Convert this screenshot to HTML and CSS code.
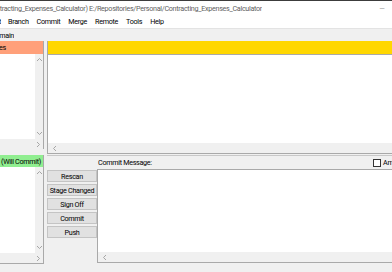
FILE: index.html
```html
<!DOCTYPE html>
<html lang="en">

<head>
    <meta charset="UTF-8">
    <meta name="viewport" content="width=device-width, initial-scale=1.0">
    <title>Git Gui</title>
    <link rel="stylesheet" href="styles.css">
</head>

<body>
    <div class="window">
        <div class="titlebar">
            <div class="title"><span>Git Gui (Contracting_Expenses_Calculator) E:/Repositories/Personal/Contracting_Expenses_Calculator</span></div>
            <div class="win-min">&#8212;</div>
        </div>
        <div class="menubar">
            <div class="menu-lead">
                <span>Repository</span>
                <span>Edit</span>
            </div>
            <span>Branch</span>
            <span>Commit</span>
            <span>Merge</span>
            <span>Remote</span>
            <span>Tools</span>
            <span>Help</span>
        </div>
        <div class="branch-bar"><span>Current Branch: main</span></div>

        <div class="top">
            <div class="files">
                <div class="pane-header unstaged"><span>Unstaged Changes</span></div>
                <div class="list-wrap">
                    <div class="list"></div>
                    <div class="vscroll">
                        <svg width="7" height="5" viewBox="0 0 7 5"><path d="M1 4L3.5 1.5L6 4" fill="none" stroke="#a6a6a6"/></svg>
                        <svg width="7" height="5" viewBox="0 0 7 5"><path d="M1 1L3.5 3.5L6 1" fill="none" stroke="#a6a6a6"/></svg>
                    </div>
                </div>
                <div class="hscroll right">
                    <svg width="5" height="7" viewBox="0 0 5 7"><path d="M1 1L3.5 3.5L1 6" fill="none" stroke="#a6a6a6"/></svg>
                </div>
            </div>
            <div class="diff">
                <div class="diff-header"></div>
                <div class="diff-body"></div>
                <div class="hscroll">
                    <svg width="5" height="7" viewBox="0 0 5 7"><path d="M4 1L1.5 3.5L4 6" fill="none" stroke="#a6a6a6"/></svg>
                </div>
            </div>
        </div>

        <div class="bottom">
            <div class="files staged-files">
                <div class="pane-header staged"><span>Staged Changes (Will Commit)</span></div>
                <div class="list-wrap">
                    <div class="list"></div>
                    <div class="vscroll">
                        <svg width="7" height="5" viewBox="0 0 7 5"><path d="M1 4L3.5 1.5L6 4" fill="none" stroke="#a6a6a6"/></svg>
                        <svg width="7" height="5" viewBox="0 0 7 5"><path d="M1 1L3.5 3.5L6 1" fill="none" stroke="#a6a6a6"/></svg>
                    </div>
                </div>
                <div class="hscroll right">
                    <svg width="5" height="7" viewBox="0 0 5 7"><path d="M1 1L3.5 3.5L1 6" fill="none" stroke="#a6a6a6"/></svg>
                </div>
            </div>
            <div class="commit-area">
                <div class="commit-label-row">
                    <span class="commit-label">Commit Message:</span>
                    <span class="amend"><span class="checkbox"></span>Amend Last Commit</span>
                </div>
                <div class="commit-main">
                    <div class="buttons">
                        <button class="btn">Rescan</button>
                        <button class="btn">Stage Changed</button>
                        <button class="btn">Sign Off</button>
                        <button class="btn">Commit</button>
                        <button class="btn">Push</button>
                    </div>
                    <div class="message">
                        <div class="message-body"></div>
                        <div class="hscroll">
                            <svg width="5" height="7" viewBox="0 0 5 7"><path d="M4 1L1.5 3.5L4 6" fill="none" stroke="#a6a6a6"/></svg>
                        </div>
                    </div>
                </div>
            </div>
        </div>
        <div class="status"></div>
    </div>
</body>

</html>
```

FILE: styles.css
```css
body {
    margin: 0;
    background-color: #f0f0f0;
    font-family: Roboto, "Noto Sans", sans-serif;
    font-size: 7.2px;
    letter-spacing: -0.3px;
    color: #000;
    overflow: hidden;
}

.window {
    width: 392px;
    height: 272px;
    display: flex;
    flex-direction: column;
    overflow: hidden;
}

.titlebar {
    height: 14px;
    border-top: 1px solid #3c3c3c;
    background-color: #fff;
    display: flex;
    align-items: center;
    color: #5f5f5f;
}

.title {
    width: 262px;
    display: flex;
    justify-content: flex-end;
    overflow: hidden;
    white-space: nowrap;
}

.win-min {
    margin-left: auto;
    width: 20px;
    text-align: center;
    color: #9a9a9a;
}

.menubar {
    height: 13px;
    background-color: #fff;
    display: flex;
    align-items: center;
    gap: 8px;
    white-space: nowrap;
}

.menu-lead {
    width: 1px;
    margin-right: -1px;
    display: flex;
    justify-content: flex-end;
    gap: 8px;
    overflow: hidden;
}

.branch-bar {
    height: 12px;
    border-top: 1px solid #e3e3e3;
    display: flex;
    align-items: center;
    white-space: nowrap;
}

.branch-bar span {
    width: 14px;
    display: flex;
    justify-content: flex-end;
    overflow: hidden;
}

.top {
    height: 113px;
    display: flex;
    gap: 3px;
}

.files {
    width: 43px;
    border-right: 1px solid #a9a9a9;
    display: flex;
    flex-direction: column;
}

.pane-header {
    height: 13px;
    display: flex;
    align-items: center;
    justify-content: flex-end;
    overflow: hidden;
    white-space: nowrap;
}

.unstaged {
    background-color: #ffa07a;
}

.unstaged span {
    margin-right: 37px;
}

.staged {
    background-color: #90ee90;
    height: 12px;
}

.staged span {
    margin-right: 2px;
}

.list-wrap {
    flex: 1;
    display: flex;
}

.list {
    flex: 1;
    background-color: #fff;
}

.vscroll {
    width: 8px;
    background-color: #f0f0f0;
    display: flex;
    flex-direction: column;
    justify-content: space-between;
    align-items: center;
    padding: 3px 0;
}

.hscroll {
    height: 10px;
    background-color: #f0f0f0;
    display: flex;
    align-items: center;
    padding: 0 4px;
}

.hscroll.right {
    justify-content: flex-end;
    padding: 0 2px;
}

.top .files {
    height: 108px;
}

.diff {
    flex: 1;
    border-left: 1px solid #a9a9a9;
    border-bottom: 1px solid #a9a9a9;
    display: flex;
    flex-direction: column;
}

.diff-header {
    height: 13px;
    background-color: #ffd700;
    border-bottom: 1px solid #a9a9a9;
}

.diff-body {
    flex: 1;
    background-color: #fff;
}

.bottom {
    height: 108px;
    margin-top: 1px;
    display: flex;
    gap: 3px;
}

.staged-files {
    height: 108px;
    border-bottom: 1px solid #a9a9a9;
}

.commit-area {
    flex: 1;
    display: flex;
    flex-direction: column;
    border-top: 1px solid #c8c8c8;
}

.commit-label-row {
    height: 13px;
    display: flex;
    align-items: center;
    white-space: nowrap;
    overflow: hidden;
}

.commit-label {
    margin-left: 51px;
}

.amend {
    margin-left: auto;
    flex: 0 0 19px;
    display: flex;
    align-items: center;
    overflow: hidden;
}

.checkbox {
    flex: 0 0 auto;
    width: 6px;
    height: 6px;
    border: 1px solid #333;
    background-color: #fff;
    margin-right: 2px;
}

.commit-main {
    flex: 1;
    display: flex;
}

.buttons {
    width: 50px;
    display: flex;
    flex-direction: column;
    gap: 2px;
    padding-top: 1px;
}

.btn {
    height: 12px;
    margin: 0;
    padding: 0;
    background-color: #e1e1e1;
    border: 1px solid #c4c4c4;
    font-family: inherit;
    font-size: 7.2px;
    letter-spacing: -0.3px;
    color: #000;
    white-space: nowrap;
}

.message {
    flex: 1;
    border-left: 1px solid #a9a9a9;
    border-top: 1px solid #a9a9a9;
    border-bottom: 1px solid #a9a9a9;
    display: flex;
    flex-direction: column;
}

.message-body {
    flex: 1;
    background-color: #fff;
}

.status {
    flex: 1;
}
```
